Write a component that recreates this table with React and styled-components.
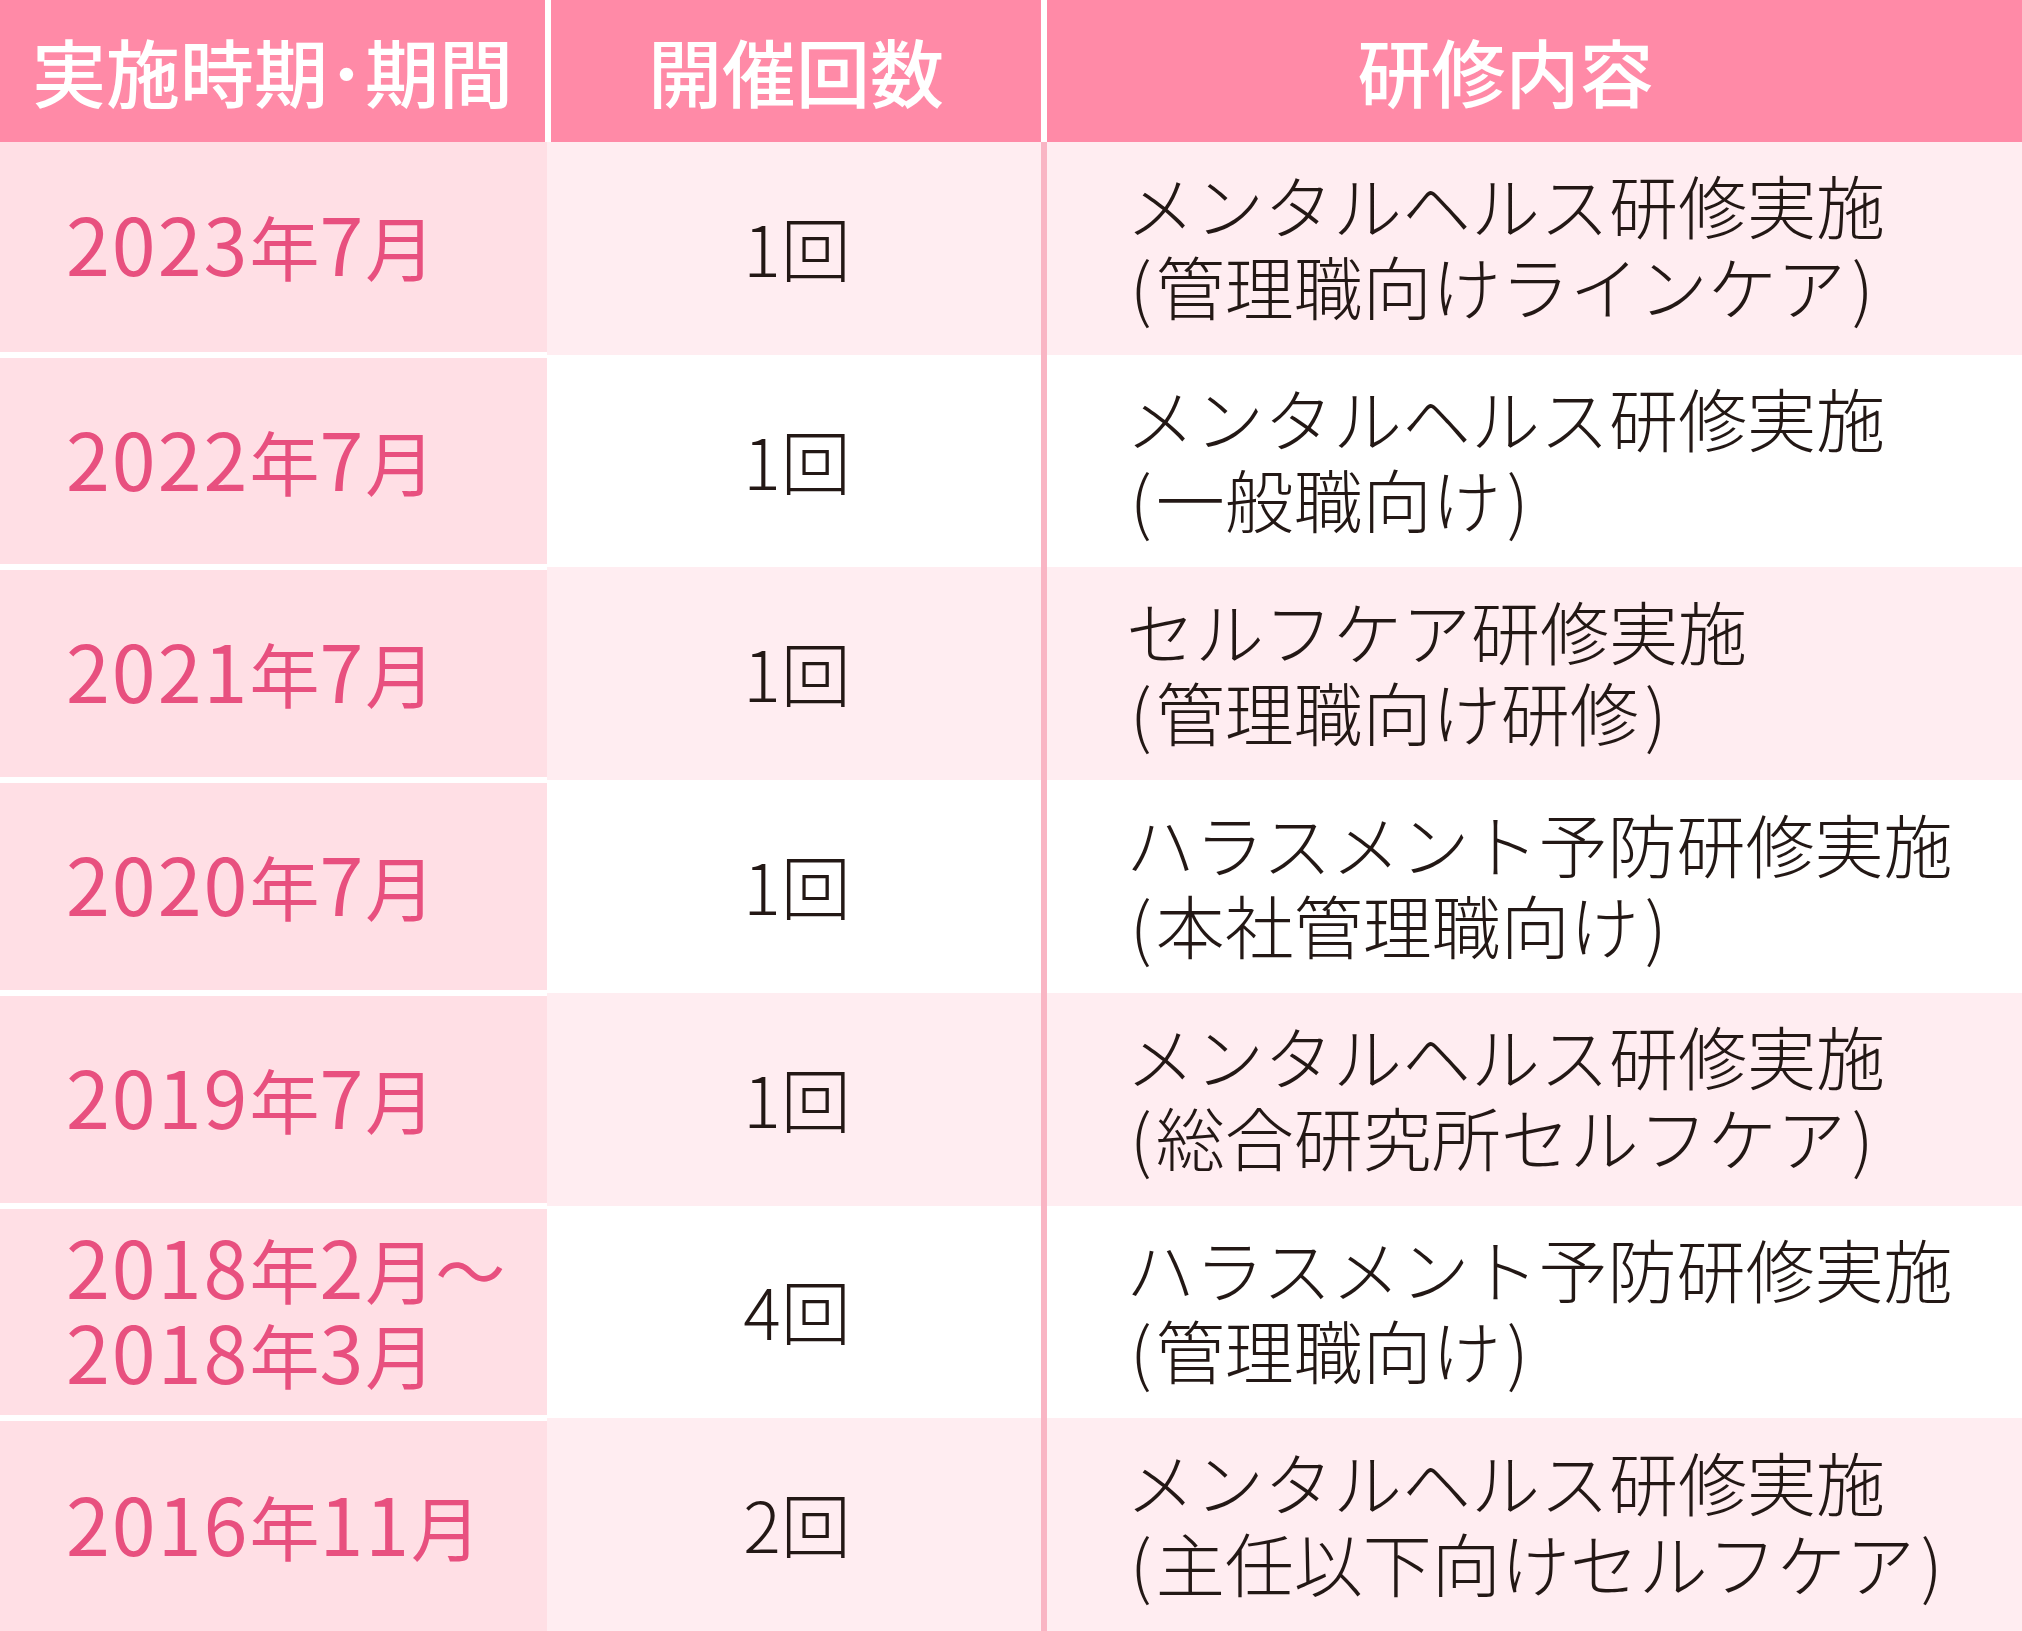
import React from "react";
import styled, { createGlobalStyle } from "styled-components";

const GlobalStyle = createGlobalStyle`
  html, body {
    margin: 0;
    padding: 0;
    background: #ffffff;
  }
  body {
    font-family: "Noto Sans CJK JP", "Noto Sans", sans-serif;
  }
`;

const Table = styled.div`
  width: 2022px;
  height: 1631px;
  display: flex;
  flex-direction: column;
  background: #ffffff;
  font-family: "Noto Sans CJK JP", "Noto Sans", sans-serif;
`;

const HeaderRow = styled.div`
  height: 142px;
  flex: 0 0 142px;
  display: grid;
  grid-template-columns: 545px 490px 975px;
  column-gap: 6px;
  background: #ffffff;
`;

const HeaderCell = styled.div`
  background: #ff8aa7;
  color: #ffffff;
  font-size: 74px;
  font-weight: 500;
  display: flex;
  align-items: center;
  justify-content: center;
  padding-bottom: 4px;
  padding-right: ${(p) => p.$shift || 0}px;
  box-sizing: border-box;
`;

const Row = styled.div`
  flex: 1 1 0;
  display: grid;
  grid-template-columns: 547px 494px 6px 975px;
  background: ${(p) => (p.$alt ? "#ffedf1" : "#ffffff")};
  min-height: 0;
`;

const DateCell = styled.div`
  background: #ffdfe5;
  box-sizing: border-box;
  border-top: ${(p) => (p.$first ? "0" : "3px solid #ffffff")};
  border-bottom: ${(p) => (p.$last ? "0" : "3px solid #ffffff")};
  display: flex;
  align-items: center;
  padding-left: 66px;
  padding-bottom: 6px;
  color: #e8507f;
  font-size: 70px;
  font-weight: 400;
  line-height: 81px;
`;

const Digits = styled.span`
  font-size: 79px;
  letter-spacing: 2px;
`;

const CountCell = styled.div`
  display: flex;
  align-items: center;
  justify-content: center;
  color: #231815;
  font-size: 70px;
  font-weight: 300;
  padding-left: 6px;
  padding-bottom: 4px;
  box-sizing: border-box;
`;

const Divider = styled.div`
  background: #f9b5c4;
`;

const ContentCell = styled.div`
  display: flex;
  align-items: center;
  padding-left: 79px;
  color: #231815;
  font-size: 69px;
  font-weight: 300;
  line-height: 81px;
  padding-bottom: 6px;
  box-sizing: border-box;
`;

const Paren = styled.span`
  margin: ${(p) => (p.$open ? "0 4px 0 4px" : "0 0 0 6px")};
`;

const Lines = styled.div`
  display: flex;
  flex-direction: column;
`;

const rows = [
  { date: ["2023年7月"], count: "1回", content: ["メンタルヘルス研修実施", "(管理職向けラインケア)"] },
  { date: ["2022年7月"], count: "1回", content: ["メンタルヘルス研修実施", "(一般職向け)"] },
  { date: ["2021年7月"], count: "1回", content: ["セルフケア研修実施", "(管理職向け研修)"] },
  { date: ["2020年7月"], count: "1回", content: ["ハラスメント予防研修実施", "(本社管理職向け)"] },
  { date: ["2019年7月"], count: "1回", content: ["メンタルヘルス研修実施", "(総合研究所セルフケア)"] },
  { date: ["2018年2月～", "2018年3月"], count: "4回", content: ["ハラスメント予防研修実施", "(管理職向け)"] },
  { date: ["2016年11月"], count: "2回", content: ["メンタルヘルス研修実施", "(主任以下向けセルフケア)"] },
];

function DateText({ text }) {
  const parts = text.split(/(\d+)/).filter(Boolean);
  return (
    <span>
      {parts.map((p, i) =>
        /^\d+$/.test(p) ? <Digits key={i}>{p}</Digits> : <React.Fragment key={i}>{p}</React.Fragment>
      )}
    </span>
  );
}

function ContentText({ text }) {
  const parts = text.split(/([()])/).filter(Boolean);
  return (
    <span>
      {parts.map((p, i) =>
        p === "(" || p === ")" ? (
          <Paren key={i} $open={p === "("}>{p}</Paren>
        ) : (
          <React.Fragment key={i}>{p}</React.Fragment>
        )
      )}
    </span>
  );
}

export default function App() {
  return (
    <>
      <GlobalStyle />
      <Table>
        <HeaderRow>
          <HeaderCell>実施時期･期間</HeaderCell>
          <HeaderCell>開催回数</HeaderCell>
          <HeaderCell $shift={58}>研修内容</HeaderCell>
        </HeaderRow>
        {rows.map((r, i) => (
          <Row key={i} $alt={i % 2 === 0}>
            <DateCell $first={i === 0} $last={i === rows.length - 1}>
              <Lines>
                {r.date.map((d) => (
                  <DateText key={d} text={d} />
                ))}
              </Lines>
            </DateCell>
            <CountCell>{r.count}</CountCell>
            <Divider />
            <ContentCell>
              <Lines>
                {r.content.map((c) => (
                  <ContentText key={c} text={c} />
                ))}
              </Lines>
            </ContentCell>
          </Row>
        ))}
      </Table>
    </>
  );
}
